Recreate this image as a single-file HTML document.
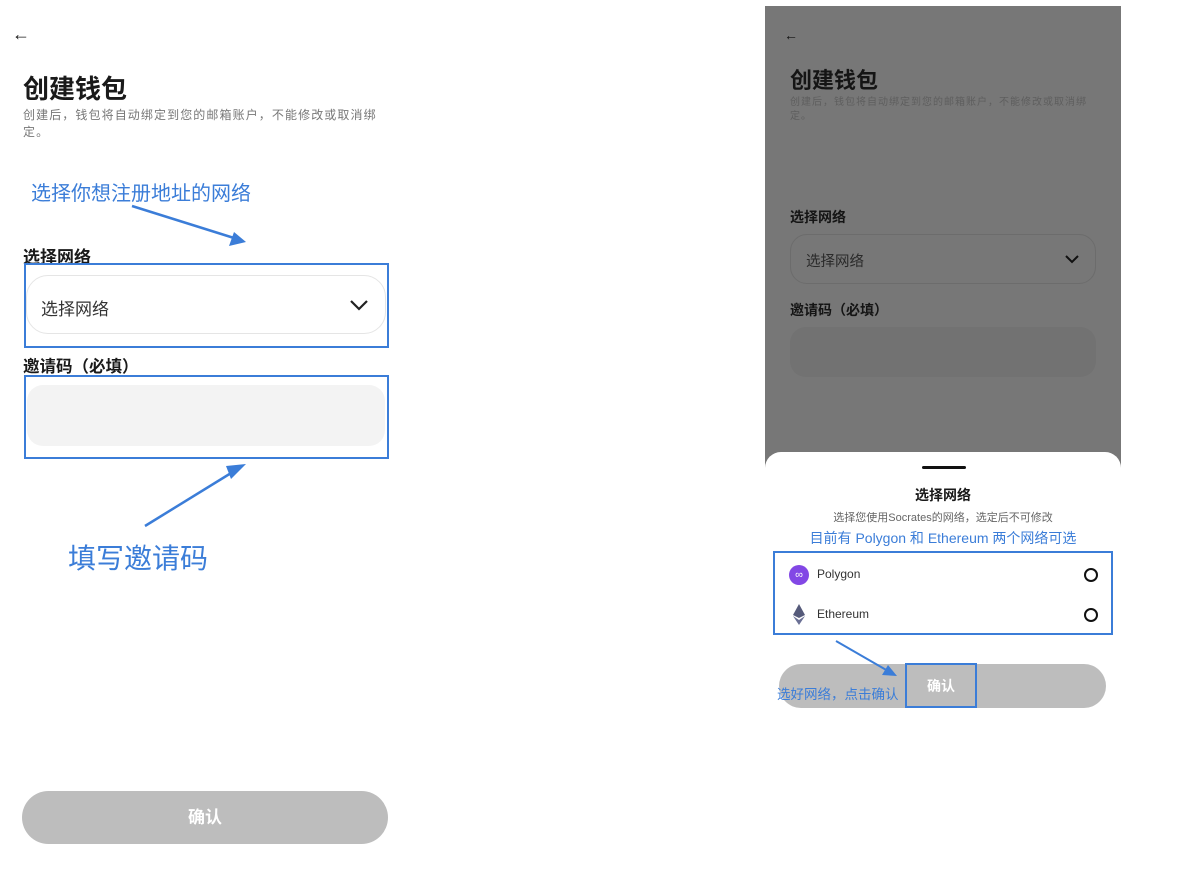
<!DOCTYPE html>
<html><head><meta charset="utf-8"><style>
*{margin:0;padding:0;box-sizing:border-box}
body{width:1181px;height:871px;background:#fff;position:relative;overflow:hidden;font-family:"Liberation Sans","Noto Sans CJK SC",sans-serif;color:#1a1a1a}
.a{position:absolute;white-space:nowrap}
.blue{color:#3b7dd8}
.bb{position:absolute;border:2.5px solid #3b7dd8}
</style></head><body>
<!-- LEFT -->
<div class="a" style="left:12px;top:24px;font-size:18px">&#8592;</div>
<div class="a" style="left:23px;top:69px;font-size:26px;font-weight:bold">创建钱包</div>
<div class="a" style="left:23px;top:107px;font-size:12px;letter-spacing:1.1px;color:#777;line-height:17px;white-space:normal;width:362px">创建后，钱包将自动绑定到您的邮箱账户，不能修改或取消绑定。</div>
<div class="a blue" style="left:31px;top:177px;font-size:20px">选择你想注册地址的网络</div>
<svg class="a" style="left:0;top:0" width="400" height="600"><line x1="132" y1="206" x2="234" y2="238" stroke="#3b7dd8" stroke-width="2.5"/><polygon points="246,242 229,246 234,232" fill="#3b7dd8"/><line x1="145" y1="526" x2="236" y2="470" stroke="#3b7dd8" stroke-width="2.5"/><polygon points="246,464 231,479 226,466" fill="#3b7dd8"/></svg>
<div class="a" style="left:23px;top:243px;font-size:17px;font-weight:bold">选择网络</div>
<div class="a" style="left:26px;top:275px;width:360px;height:59px;border:1px solid #e5e5e5;border-radius:22px"></div>
<div class="a" style="left:41px;top:295px;font-size:17px;color:#333">选择网络</div>
<svg class="a" style="left:349px;top:298px" width="20" height="14"><path d="M2 3 L10 11 L18 3" fill="none" stroke="#222" stroke-width="2.2"/></svg>
<div class="bb" style="left:24px;top:263px;width:365px;height:85px"></div>
<div class="a" style="left:23px;top:353px;font-size:16.5px;font-weight:bold">邀请码（必填）</div>
<div class="a" style="left:27px;top:385px;width:358px;height:61px;background:#f3f3f3;border-radius:16px"></div>
<div class="bb" style="left:24px;top:375px;width:365px;height:84px"></div>
<div class="a blue" style="left:68px;top:537px;font-size:28px">填写邀请码</div>
<div class="a" style="left:22px;top:791px;width:366px;height:53px;background:#bdbdbd;border-radius:27px;color:#fff;font-size:17px;font-weight:bold;text-align:center;line-height:53px">确认</div>

<!-- RIGHT -->
<div class="a" style="left:765px;top:6px;width:356px;height:865px;background:#777"></div>
<div class="a" style="left:784px;top:27px;font-size:14px;color:#111">&#8592;</div>
<div class="a" style="left:790px;top:63px;font-size:22px;font-weight:bold;color:#151515">创建钱包</div>
<div class="a" style="left:790px;top:96px;font-size:10px;letter-spacing:1px;color:#5e5e5e;line-height:14px;white-space:normal;width:302px">创建后，钱包将自动绑定到您的邮箱账户，不能修改或取消绑定。</div>
<div class="a" style="left:790px;top:207px;font-size:14px;font-weight:bold;color:#151515">选择网络</div>
<div class="a" style="left:790px;top:234px;width:306px;height:50px;border:1px solid #6c6c6c;border-radius:17px"></div>
<div class="a" style="left:806px;top:250px;font-size:14.5px;color:#2a2a2a">选择网络</div>
<svg class="a" style="left:1064px;top:254px" width="16" height="11"><path d="M2 2 L8 8 L14 2" fill="none" stroke="#111" stroke-width="2"/></svg>
<div class="a" style="left:790px;top:300px;font-size:14px;font-weight:bold;color:#151515">邀请码（必填）</div>
<div class="a" style="left:790px;top:327px;width:306px;height:50px;background:#727272;border-radius:16px"></div>
<div class="a" style="left:765px;top:452px;width:356px;height:419px;background:#fff;border-radius:16px 16px 0 0"></div>
<div class="a" style="left:922px;top:466px;width:44px;height:3px;background:#111;border-radius:2px"></div>
<div class="a" style="left:765px;top:485px;width:356px;text-align:center;font-size:14px;font-weight:bold">选择网络</div>
<div class="a" style="left:765px;top:509px;width:356px;text-align:center;font-size:11px;color:#666">选择您使用Socrates的网络，选定后不可修改</div>
<div class="a blue" style="left:765px;top:528px;width:356px;text-align:center;font-size:14px">目前有 Polygon 和 Ethereum 两个网络可选</div>
<div class="bb" style="left:773px;top:551px;width:340px;height:84px"></div>
<div class="a" style="left:789px;top:565px;width:20px;height:20px;border-radius:50%;background:#8247e5;color:#fff;font-size:11px;text-align:center;line-height:20px">∞</div>
<div class="a" style="left:817px;top:567px;font-size:12px;color:#333">Polygon</div>
<svg class="a" style="left:792px;top:604px" width="14" height="22"><polygon points="7,0 13,11 7,14 1,11" fill="#555a7a"/><polygon points="7,16 13,12 7,21 1,12" fill="#6b7095"/></svg>
<div class="a" style="left:817px;top:607px;font-size:12px;color:#333">Ethereum</div>
<div class="a" style="left:1084px;top:568px;width:14px;height:14px;border:2px solid #111;border-radius:50%"></div>
<div class="a" style="left:1084px;top:608px;width:14px;height:14px;border:2px solid #111;border-radius:50%"></div>
<div class="a" style="left:779px;top:664px;width:327px;height:44px;background:#bdbdbd;border-radius:22px"></div>
<div class="a" style="left:906px;top:676px;width:70px;text-align:center;font-size:14px;font-weight:bold;color:#fff">确认</div>
<div class="bb" style="left:905px;top:663px;width:72px;height:45px"></div>
<div class="a blue" style="left:777px;top:683px;font-size:13.5px">选好网络，点击确认</div>
<svg class="a" style="left:820px;top:630px" width="90" height="60"><line x1="16" y1="11" x2="68" y2="41" stroke="#3b7dd8" stroke-width="2"/><polygon points="77,46 62,45 68,35" fill="#3b7dd8"/></svg>
</body></html>
